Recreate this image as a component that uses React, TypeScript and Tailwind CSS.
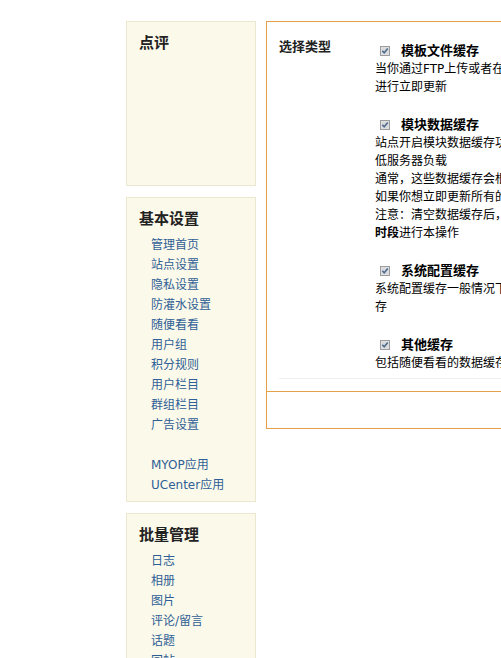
const FONT = "font-['Tahoma','DejaVu_Sans','Noto_Sans_CJK_SC',sans-serif]";

const sidebar = [
  { title: "点评", links: [] as string[], fixed: true },
  {
    title: "基本设置",
    links: [
      "管理首页",
      "站点设置",
      "隐私设置",
      "防灌水设置",
      "随便看看",
      "用户组",
      "积分规则",
      "用户栏目",
      "群组栏目",
      "广告设置",
      "",
      "MYOP应用",
      "UCenter应用",
    ],
  },
  {
    title: "批量管理",
    links: ["日志", "相册", "图片", "评论/留言", "话题", "回帖"],
  },
];

const CheckMark = () => (
  <svg width="10" height="10" viewBox="0 0 10 10" className="shrink-0">
    <rect x="0.5" y="0.5" width="9" height="9" fill="#e4e4e0" stroke="#9a9c9e" />
    <rect x="1.5" y="1.5" width="7" height="7" fill="#d8dadc" />
    <path d="M2.3 4.8 L4.2 6.8 L7.8 2.6" fill="none" stroke="#4f6c8e" strokeWidth="1.6" />
  </svg>
);

const cacheItems = [
  {
    title: "模板文件缓存",
    lines: [<>当你通过FTP上传或者在线编辑修改了模板文件后，需要</>, <>进行立即更新</>],
  },
  {
    title: "模块数据缓存",
    lines: [
      <>站点开启模块数据缓存功能后，可以大幅提高页面访问速度，降</>,
      <>低服务器负载</>,
      <>通常，这些数据缓存会根据设置的更新时间自动进行更新</>,
      <>如果你想立即更新所有的数据缓存，可以在这里进行清空操作</>,
      <>注意：清空数据缓存后，会增加服务器负载，请选择<b>访问低峰</b></>,
      <>
        <b>时段</b>进行本操作
      </>,
    ],
  },
  {
    title: "系统配置缓存",
    lines: [<>系统配置缓存一般情况下会自动更新，当出现异常时可以手动更新缓</>, <>存</>],
  },
  {
    title: "其他缓存",
    lines: [<>包括随便看看的数据缓存、站点统计数据缓存等</>],
  },
];

export default function App() {
  return (
    <div className={`w-[501px] h-[658px] overflow-hidden bg-white text-[12px] text-black ${FONT}`}>
      <div className="flex items-start gap-[10px] pl-[126px] pt-[21px]">
        <div className="w-[130px] shrink-0 flex flex-col gap-[11px]">
          {sidebar.map((box) => (
            <div
              key={box.title}
              className={`border border-[#ece8cf] bg-[#fbf9e9] px-[12px] pt-[11px] pb-[6px] ${box.fixed ? "h-[165px]" : ""}`}
            >
              <h2 className="text-[15px] leading-[20px] font-bold text-[#222]">{box.title}</h2>
              {box.links.length > 0 && (
                <ul className="mt-[6px] pl-[12px]">
                  {box.links.map((l, i) => (
                    <li key={i} className="h-[20px] leading-[20px] text-[#2f5f97] whitespace-nowrap">
                      {l}
                    </li>
                  ))}
                </ul>
              )}
            </div>
          ))}
        </div>

        <div className="w-[420px] shrink-0 border border-[#e5a04c] bg-white">
          <div className="px-[12px] pt-[13px] pb-[12px]">
            <div className="flex border-b border-[#f0f0f0]">
              <div className="w-[96px] shrink-0 pt-[3px] text-[13px] leading-[18px] font-bold text-[#222]">
                选择类型
              </div>
              <div className="pt-[7px] whitespace-nowrap">
                {cacheItems.map((item) => (
                  <div key={item.title} className="mb-[20px] last:mb-[6px]">
                    <div className="flex items-center h-[18px] pl-[5px] gap-[11px]">
                      <CheckMark />
                      <span className="text-[13px] font-bold">{item.title}</span>
                    </div>
                    {item.lines.map((line, i) => (
                      <div key={i} className="leading-[18px]">
                        {line}
                      </div>
                    ))}
                  </div>
                ))}
              </div>
            </div>
          </div>
          <div className="h-[37px] border-t border-[#e5a04c]" />
        </div>
      </div>
    </div>
  );
}
